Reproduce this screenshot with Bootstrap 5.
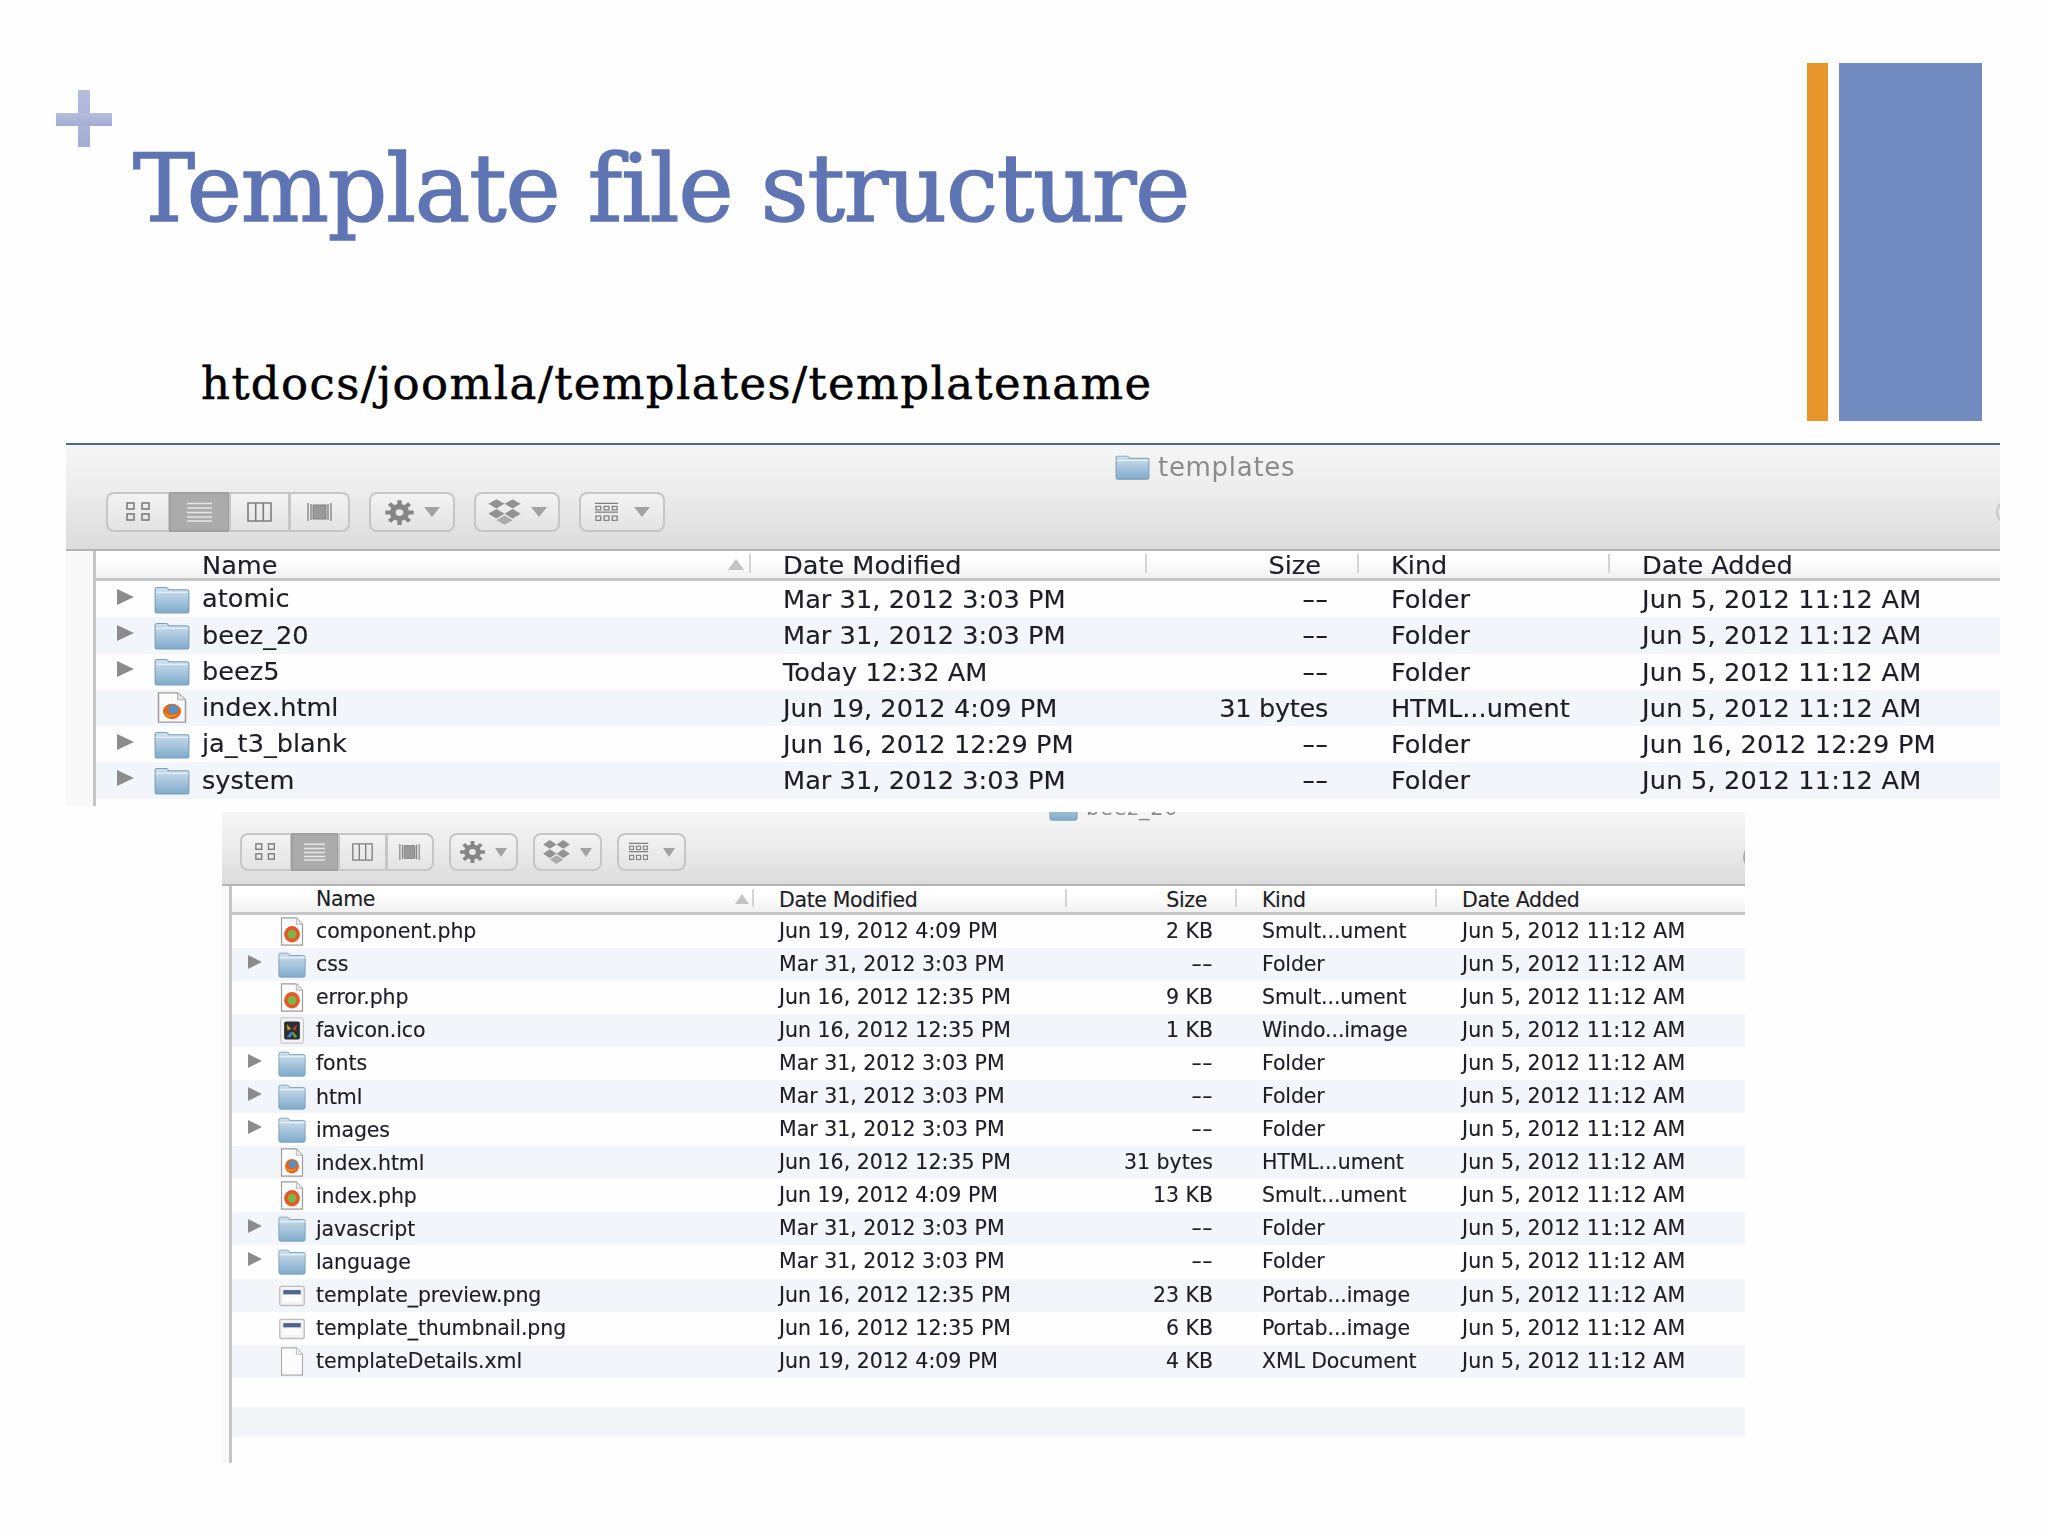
<!DOCTYPE html>
<html lang="en">
<head>
<meta charset="UTF-8">
<title>Template file structure</title>
<link href="https://cdn.jsdelivr.net/npm/bootstrap@5.3.0/dist/css/bootstrap.min.css" rel="stylesheet">
<style>
body { background: #fefefe; width: 2048px; height: 1536px; overflow: hidden; }
.slide-top { height: 443px; padding-right: 66px; }
.plus { width: 56px; height: 57px; margin: 90px 0 -4px 56px; display: block; }
.slide-title { font-family: "DejaVu Serif", serif; font-size: 93px; line-height: 1; margin: 0 0 0 133px; color: #5f75b3; font-weight: 400; letter-spacing: -1.1px; -webkit-text-stroke: 1.6px #5f75b3; white-space: nowrap; }
.slide-path { font-family: "DejaVu Serif", serif; font-size: 45px; line-height: 1; margin: 125px 0 0 201px; color: #000; letter-spacing: 1.4px; -webkit-text-stroke: .5px #000; white-space: nowrap; }
.bars { gap: 11px; }
.bar-orange { width: 21px; height: 358px; margin-top: 63px; background: #e8952b; }
.bar-blue { width: 143px; height: 358px; margin-top: 63px; background: #728bc1; }

/* finder windows */
.finder { font-family: "DejaVu Sans", sans-serif; color: #1d1d26; -webkit-text-stroke: .15px #1d1d26; filter: blur(.55px); overflow: hidden; }
.finder-lg { margin-left: 66px; width: 1934px; height: 367px; border-top: 2px solid #4a688f; --fs: 25.6px; --row: 36.25px;
  --cols: 30px 655px 396px 212px 251px 390px; --seg: 61px; --tool: 86px; }
.finder-sm { margin: 2px 0 0 222px; width: 1523px; height: 651px; --fs: 20.5px; --row: 33.05px;
  --cols: 10px 522px 313px 170px 200px 308px; --seg: 48.5px; --tool: 69.5px; }

.toolbar { background: linear-gradient(#f6f6f6, #ececec 45%, #dcdcdc); border-bottom: 2px solid #b4b4b4; position: relative; }
.finder-lg .toolbar { height: 106px; padding: 8px 0 0 40px; }
.finder-sm .toolbar { height: 74px; padding: 0 0 0 18px; }
.win-title { color: #8b8b8b; -webkit-text-stroke: 0; font-size: 26px; line-height: 28px; letter-spacing: .7px; gap: 8px; margin-left: 1009px; height: 28px; }
.finder-sm .win-title { font-size: 21px; overflow: hidden; height: 10px; line-height: 0; margin-left: 809px; align-items: flex-end; }
.finder-sm .win-title svg { margin-top: -18px; flex-shrink: 0; }
.finder-lg .win-title svg { width: 35px; height: 28px; }
.finder-sm .win-title svg { width: 29px; height: 28px; }
.win-title span { display: block; }
.finder-sm .win-title span { margin-top: -20px; line-height: 28px; }
.finder-lg .tools { margin-top: 11px; gap: 19px; }
.finder-sm .tools { margin-top: 11px; gap: 14.5px; }
.finder-lg .tools, .finder-lg .tool, .finder-lg .btn-group .btn { height: 40px; }
.finder-sm .tools, .finder-sm .tool, .finder-sm .btn-group .btn { height: 38px; }
.tool, .btn-group .btn { --bs-btn-padding-x: 0; --bs-btn-padding-y: 0; background: linear-gradient(#f3f3f3, #e3e3e3); border: 2px solid #c6c6c6; border-radius: 8px; }
.tool { width: var(--tool); gap: 9px; }
.btn-group .btn { width: var(--seg); flex: 0 0 auto; }
.btn-group .btn.first { width: calc(var(--seg) + 3px); }
.btn-group .btn.sel { background: #ababab; border-color: #a0a0a0; }
.ic-gear { width: 31px; height: 27px; }
.ic-drop { width: 35px; height: 28px; }
.ic-arr { width: 25px; height: 21px; margin-right: 6px; }
.finder-sm .ic-gear { width: 27px; height: 24px; }
.finder-sm .ic-drop { width: 29px; height: 26px; }
.finder-sm .ic-arr { width: 21px; height: 20px; margin-right: 5px; }
.caret-dn { width: 0; height: 0; border-left: 8px solid transparent; border-right: 8px solid transparent; border-top: 10px solid #a2a2a2; }
.finder-sm .caret-dn { border-left-width: 6.5px; border-right-width: 6.5px; border-top-width: 9px; }
.seg-ic { width: 25px; height: 20px; }
.finder-sm .seg-ic { width: 21px; height: 18px; }
.search-edge { position: absolute; right: -22px; bottom: 24px; width: 26px; height: 26px; border: 2px solid #c8c8c8; border-radius: 50%; }
.finder-sm .search-edge { right: -24px; bottom: 14px; border-color: #aaa; }

.listing { display: grid; grid-template-columns: var(--cols); font-size: var(--fs); }
.gutter { grid-column: 1; grid-row: 1 / 30; background: #f8f8f8; border-right: 3px solid #c4c4c4; }
.head { display: contents; }
.head > div { background: linear-gradient(#fff 30%, #f1f1f1); border-bottom: 3px solid #c6c6c6; white-space: nowrap; }
.finder-lg .head > div { height: 30px; line-height: 28px; }
.finder-sm .head > div { height: 29px; line-height: 28px; letter-spacing: -.35px; }
.head .cell { position: relative; }
.head .cell::after { content: ""; position: absolute; right: 0; top: 3px; bottom: 5px; width: 2px; background: #d4d4d4; }
.head .cell:last-child::after { display: none; }
.row-f { display: contents; }
.row-f > div { height: var(--row); line-height: var(--row); white-space: nowrap; }
.finder-lg .row-f > .c2 { letter-spacing: .05px; }
.finder-lg .row-f > .c3 { letter-spacing: -.3px; }
.finder-lg .row-f > .c4 { letter-spacing: 0; }
.finder-lg .row-f > .c5 { letter-spacing: .2px; }
.finder-sm .row-f > .c2 { letter-spacing: 0; }
.finder-sm .row-f > .c4 { letter-spacing: -.12px; }
.finder-sm .row-f > .c5 { letter-spacing: .13px; }
.finder-sm .row-f > .name { letter-spacing: -.1px; }
.row-f:nth-of-type(even) > div { background: #f2f6fa; }
.row-f > .name, .head > .name { display: flex; align-items: center; }
.row-f > .name { line-height: 1; }
.finder-lg .name { padding-left: 21px; }
.finder-sm .name { padding-left: 16px; }
.finder-lg .c2, .finder-lg .c4, .finder-lg .c5 { padding-left: 32px; }
.finder-sm .c2, .finder-sm .c4, .finder-sm .c5 { padding-left: 25px; }
.c3 { text-align: right; }
.finder-lg .c3 { padding-right: 31px; }
.finder-sm .c3 { padding-right: 24px; }
.finder-lg .head .c3 { padding-right: 38px; }
.finder-sm .head .c3 { padding-right: 30px; }
.dash { display: inline-block; transform: scaleX(1.45); transform-origin: right center; }
.tri { width: 0; height: 0; border-top: 8px solid transparent; border-bottom: 8px solid transparent; border-left: 17px solid #8c8c8c; margin-top: -5px; }
.tri-slot { flex: 0 0 17px; margin-right: 20px; display: flex; }
.ico { flex: 0 0 36px; width: 36px; height: 31px; margin-right: 12px; }
.finder-sm .tri-slot { flex-basis: 14px; margin-right: 16px; }
.finder-sm .tri { border-left-width: 14px; border-top-width: 7px; border-bottom-width: 7px; }
.finder-sm .ico { flex-basis: 28px; width: 28px; height: 29px; margin-right: 10px; }
.sortcaret { margin-left: auto; margin-right: 7px; width: 0; height: 0; border-left: 8px solid transparent; border-right: 8px solid transparent; border-bottom: 11px solid #c4c4c4; }
.finder-sm .sortcaret { margin-right: 5px; border-left-width: 7px; border-right-width: 7px; border-bottom-width: 10px; }
.head .label { flex: 0 0 auto; }
.finder-lg .head .label { margin-left: 85px; }
.finder-sm .head .label { margin-left: 68px; }
.blank-row { grid-column: 2 / 7; height: 29.5px; }
.blank-row.alt { background: #f3f5f8; }
.blank-row.end { height: 27px; }
.finder-lg .blank-row.end { height: 7px; }
</style>
</head>
<body>
<svg width="0" height="0" class="position-absolute">
  <defs>
    <linearGradient id="fg" x1="0" y1="0" x2="0" y2="1"><stop offset="0" stop-color="#d0e1ee"/><stop offset="1" stop-color="#7fabcb"/></linearGradient>
    <linearGradient id="pg" x1="0" y1="0" x2="0" y2="1"><stop offset="0" stop-color="#b5bedc"/><stop offset="1" stop-color="#a1add2"/></linearGradient>
  </defs>
  <symbol id="folder" viewBox="0 0 32 32" preserveAspectRatio="none">
    <path d="M1 5.500q0-2 2-2h8q1.500 0 2 2.500h16q2 0 2 2v20q0 2-2 2H3q-2 0-2-2z" fill="url(#fg)" stroke="#7c9fb9" stroke-width="1"/>
    <path d="M1.500 8.500h29" stroke="#eef5fa" stroke-width="1.200"/>
  </symbol>
  <symbol id="page-ff" viewBox="0 0 32 32" preserveAspectRatio="none">
    <path d="M4 1h17l7 7v23H4z" fill="#fbfbfb" stroke="#9a9a9a" stroke-width="1.300"/>
    <path d="M21 1v7h7" fill="#e6e6e6" stroke="#b4b4b4"/>
    <circle cx="16" cy="20" r="8" fill="#e0661e"/>
    <circle cx="17" cy="18" r="4.500" fill="#5b8fc4"/>
    <path d="M8 20q3 7 10 5 4-2 5-7-1 5-6 6-5 .5-9-4z" fill="#f0a22c"/>
  </symbol>
  <symbol id="page-php" viewBox="0 0 32 32" preserveAspectRatio="none">
    <path d="M4 1h17l7 7v23H4z" fill="#fbfbfb" stroke="#9a9a9a" stroke-width="1.300"/>
    <path d="M21 1v7h7" fill="#e6e6e6" stroke="#b4b4b4"/>
    <circle cx="16" cy="19" r="9" fill="#e6582a"/>
    <circle cx="16" cy="19" r="5" fill="#7db544"/>
  </symbol>
  <symbol id="page-fav" viewBox="0 0 32 32" preserveAspectRatio="none">
    <rect x="3" y="2" width="26" height="28" rx="2" fill="#f2f2f2" stroke="#bbb"/>
    <rect x="7" y="6" width="18" height="20" rx="2" fill="#2b2f33"/>
    <path d="M10 9l5 5-4 2z" fill="#d8a02c"/><path d="M22 9l-6 5 4 2z" fill="#c9382e"/>
    <path d="M10 23l5-6 2 2-3 5z" fill="#3f80c2"/><path d="M22 23l-5-6-1 2 3 5z" fill="#6ea83b"/>
  </symbol>
  <symbol id="page-png" viewBox="0 0 32 32" preserveAspectRatio="none">
    <rect x="2" y="6" width="28" height="21" rx="2" fill="#f3f3f3" stroke="#bdbdbd" stroke-width="1.500"/>
    <rect x="6" y="10" width="20" height="5" fill="#4d6690"/>
    <rect x="6" y="15" width="20" height="8" fill="#fbfbfb"/>
  </symbol>
  <symbol id="page-xml" viewBox="0 0 32 32" preserveAspectRatio="none">
    <path d="M4 1h17l7 7v23H4z" fill="#fcfcfc" stroke="#adadad" stroke-width="1.300"/>
    <path d="M21 1v7h7" fill="#ececec" stroke="#bcbcbc"/>
  </symbol>
  <symbol id="tb-grid" viewBox="0 0 25 20" preserveAspectRatio="none">
    <g fill="none" stroke="#7e7e7e" stroke-width="1.600"><rect x="1" y="1" width="7" height="6"/><rect x="16" y="1" width="7" height="6"/><rect x="1" y="12" width="7" height="6"/><rect x="16" y="12" width="7" height="6"/></g>
  </symbol>
  <symbol id="tb-list" viewBox="0 0 25 20" preserveAspectRatio="none">
    <path d="M0 1.500h25M0 6h25M0 10.500h25M0 15h25M0 19h25" stroke="#e6e6e6" stroke-width="1.700"/>
  </symbol>
  <symbol id="tb-cols" viewBox="0 0 25 20" preserveAspectRatio="none">
    <path d="M1 1h23v18H1zM8.700 1v18M16.300 1v18" fill="none" stroke="#7e7e7e" stroke-width="1.600"/>
  </symbol>
  <symbol id="tb-cover" viewBox="0 0 25 20" preserveAspectRatio="none">
    <rect x="6" y="3" width="13" height="14" fill="#9a9a9a" stroke="#7e7e7e" stroke-width="1"/>
    <path d="M1 1v18M4 2v16M21 2v16M24 1v18" stroke="#7e7e7e" stroke-width="1.300"/>
  </symbol>
  <symbol id="tb-gear" viewBox="0 0 24 24" preserveAspectRatio="none">
    <path d="M12 1v22M1 12h22M4.200 4.200l15.600 15.600M19.800 4.200L4.200 19.800" stroke="#858585" stroke-width="3.400"/>
    <circle cx="12" cy="12" r="7.500" fill="#858585"/><circle cx="12" cy="12" r="3" fill="#e8e8e8"/>
  </symbol>
  <symbol id="tb-drop" viewBox="0 0 26 24" preserveAspectRatio="none">
    <g fill="#929292"><path d="M7 1l6 4-6 4-6-4zM19 1l6 4-6 4-6-4zM7 9.500l6 4-6 4-6-4zM19 9.500l6 4-6 4-6-4z"/><path d="M13 15l6 4-6 4-6-4z" fill="#ababab"/></g>
  </symbol>
  <symbol id="tb-arr" viewBox="0 0 26 24" preserveAspectRatio="none">
    <path d="M1 1.500h24M1 11.500h24" stroke="#7e7e7e" stroke-width="1.500"/>
    <g fill="none" stroke="#7e7e7e" stroke-width="1.300"><rect x="2" y="5" width="5" height="4"/><rect x="10.500" y="5" width="5" height="4"/><rect x="19" y="5" width="5" height="4"/><rect x="2" y="16" width="5" height="5"/><rect x="10.500" y="16" width="5" height="5"/><rect x="19" y="16" width="5" height="5"/></g>
  </symbol>
</svg>

<header class="slide-top d-flex justify-content-between">
  <div>
    <svg class="plus" viewBox="0 0 56 57"><rect x="22" width="12" height="57" fill="url(#pg)"/><rect y="23" width="56" height="13" fill="url(#pg)"/></svg>
    <h1 class="slide-title">Template file structure</h1>
    <p class="slide-path">htdocs/joomla/templates/templatename</p>
  </div>
  <div class="bars d-flex">
    <div class="bar-orange"></div>
    <div class="bar-blue"></div>
  </div>
</header>

<section class="finder finder-lg">
  <div class="toolbar">
    <div class="win-title d-flex align-items-center"><svg><use href="#folder"/></svg><span>templates</span></div>
    <div class="tools d-flex">
      <div class="btn-group">
        <button class="btn first d-flex align-items-center justify-content-center"><svg class="seg-ic"><use href="#tb-grid"/></svg></button>
        <button class="btn sel d-flex align-items-center justify-content-center"><svg class="seg-ic"><use href="#tb-list"/></svg></button>
        <button class="btn d-flex align-items-center justify-content-center"><svg class="seg-ic"><use href="#tb-cols"/></svg></button>
        <button class="btn d-flex align-items-center justify-content-center"><svg class="seg-ic"><use href="#tb-cover"/></svg></button>
      </div>
      <button class="btn tool d-flex align-items-center justify-content-center"><svg class="ic-gear"><use href="#tb-gear"/></svg><span class="caret-dn"></span></button>
      <button class="btn tool d-flex align-items-center justify-content-center"><svg class="ic-drop"><use href="#tb-drop"/></svg><span class="caret-dn"></span></button>
      <button class="btn tool d-flex align-items-center justify-content-center"><svg class="ic-arr"><use href="#tb-arr"/></svg><span class="caret-dn"></span></button>
    </div>
    <div class="search-edge"></div>
  </div>
  <div class="listing">
    <div class="gutter"></div>
    <div class="head">
      <div class="cell name"><span class="label">Name</span><span class="sortcaret"></span></div>
      <div class="cell c2">Date Modified</div><div class="cell c3">Size</div><div class="cell c4">Kind</div><div class="cell c5">Date Added</div>
    </div>
    <div class="row-f"><div class="name"><span class="tri-slot"><i class="tri"></i></span><svg class="ico"><use href="#folder"/></svg>atomic</div><div class="c2">Mar 31, 2012 3:03 PM</div><div class="c3"><span class="dash">--</span></div><div class="c4">Folder</div><div class="c5">Jun 5, 2012 11:12 AM</div></div>
    <div class="row-f"><div class="name"><span class="tri-slot"><i class="tri"></i></span><svg class="ico"><use href="#folder"/></svg>beez_20</div><div class="c2">Mar 31, 2012 3:03 PM</div><div class="c3"><span class="dash">--</span></div><div class="c4">Folder</div><div class="c5">Jun 5, 2012 11:12 AM</div></div>
    <div class="row-f"><div class="name"><span class="tri-slot"><i class="tri"></i></span><svg class="ico"><use href="#folder"/></svg>beez5</div><div class="c2">Today 12:32 AM</div><div class="c3"><span class="dash">--</span></div><div class="c4">Folder</div><div class="c5">Jun 5, 2012 11:12 AM</div></div>
    <div class="row-f"><div class="name"><span class="tri-slot"></span><svg class="ico"><use href="#page-ff"/></svg>index.html</div><div class="c2">Jun 19, 2012 4:09 PM</div><div class="c3">31 bytes</div><div class="c4">HTML...ument</div><div class="c5">Jun 5, 2012 11:12 AM</div></div>
    <div class="row-f"><div class="name"><span class="tri-slot"><i class="tri"></i></span><svg class="ico"><use href="#folder"/></svg>ja_t3_blank</div><div class="c2">Jun 16, 2012 12:29 PM</div><div class="c3"><span class="dash">--</span></div><div class="c4">Folder</div><div class="c5">Jun 16, 2012 12:29 PM</div></div>
    <div class="row-f"><div class="name"><span class="tri-slot"><i class="tri"></i></span><svg class="ico"><use href="#folder"/></svg>system</div><div class="c2">Mar 31, 2012 3:03 PM</div><div class="c3"><span class="dash">--</span></div><div class="c4">Folder</div><div class="c5">Jun 5, 2012 11:12 AM</div></div>
    <div class="blank-row end"></div>
  </div>
</section>

<section class="finder finder-sm">
  <div class="toolbar">
    <div class="win-title d-flex"><svg><use href="#folder"/></svg><span>beez_20</span></div>
    <div class="tools d-flex">
      <div class="btn-group">
        <button class="btn first d-flex align-items-center justify-content-center"><svg class="seg-ic"><use href="#tb-grid"/></svg></button>
        <button class="btn sel d-flex align-items-center justify-content-center"><svg class="seg-ic"><use href="#tb-list"/></svg></button>
        <button class="btn d-flex align-items-center justify-content-center"><svg class="seg-ic"><use href="#tb-cols"/></svg></button>
        <button class="btn d-flex align-items-center justify-content-center"><svg class="seg-ic"><use href="#tb-cover"/></svg></button>
      </div>
      <button class="btn tool d-flex align-items-center justify-content-center"><svg class="ic-gear"><use href="#tb-gear"/></svg><span class="caret-dn"></span></button>
      <button class="btn tool d-flex align-items-center justify-content-center"><svg class="ic-drop"><use href="#tb-drop"/></svg><span class="caret-dn"></span></button>
      <button class="btn tool d-flex align-items-center justify-content-center"><svg class="ic-arr"><use href="#tb-arr"/></svg><span class="caret-dn"></span></button>
    </div>
    <div class="search-edge"></div>
  </div>
  <div class="listing">
    <div class="gutter"></div>
    <div class="head">
      <div class="cell name"><span class="label">Name</span><span class="sortcaret"></span></div>
      <div class="cell c2">Date Modified</div><div class="cell c3">Size</div><div class="cell c4">Kind</div><div class="cell c5">Date Added</div>
    </div>
    <div class="row-f"><div class="name"><span class="tri-slot"></span><svg class="ico"><use href="#page-php"/></svg>component.php</div><div class="c2">Jun 19, 2012 4:09 PM</div><div class="c3">2 KB</div><div class="c4">Smult...ument</div><div class="c5">Jun 5, 2012 11:12 AM</div></div>
    <div class="row-f"><div class="name"><span class="tri-slot"><i class="tri"></i></span><svg class="ico"><use href="#folder"/></svg>css</div><div class="c2">Mar 31, 2012 3:03 PM</div><div class="c3"><span class="dash">--</span></div><div class="c4">Folder</div><div class="c5">Jun 5, 2012 11:12 AM</div></div>
    <div class="row-f"><div class="name"><span class="tri-slot"></span><svg class="ico"><use href="#page-php"/></svg>error.php</div><div class="c2">Jun 16, 2012 12:35 PM</div><div class="c3">9 KB</div><div class="c4">Smult...ument</div><div class="c5">Jun 5, 2012 11:12 AM</div></div>
    <div class="row-f"><div class="name"><span class="tri-slot"></span><svg class="ico"><use href="#page-fav"/></svg>favicon.ico</div><div class="c2">Jun 16, 2012 12:35 PM</div><div class="c3">1 KB</div><div class="c4">Windo...image</div><div class="c5">Jun 5, 2012 11:12 AM</div></div>
    <div class="row-f"><div class="name"><span class="tri-slot"><i class="tri"></i></span><svg class="ico"><use href="#folder"/></svg>fonts</div><div class="c2">Mar 31, 2012 3:03 PM</div><div class="c3"><span class="dash">--</span></div><div class="c4">Folder</div><div class="c5">Jun 5, 2012 11:12 AM</div></div>
    <div class="row-f"><div class="name"><span class="tri-slot"><i class="tri"></i></span><svg class="ico"><use href="#folder"/></svg>html</div><div class="c2">Mar 31, 2012 3:03 PM</div><div class="c3"><span class="dash">--</span></div><div class="c4">Folder</div><div class="c5">Jun 5, 2012 11:12 AM</div></div>
    <div class="row-f"><div class="name"><span class="tri-slot"><i class="tri"></i></span><svg class="ico"><use href="#folder"/></svg>images</div><div class="c2">Mar 31, 2012 3:03 PM</div><div class="c3"><span class="dash">--</span></div><div class="c4">Folder</div><div class="c5">Jun 5, 2012 11:12 AM</div></div>
    <div class="row-f"><div class="name"><span class="tri-slot"></span><svg class="ico"><use href="#page-ff"/></svg>index.html</div><div class="c2">Jun 16, 2012 12:35 PM</div><div class="c3">31 bytes</div><div class="c4">HTML...ument</div><div class="c5">Jun 5, 2012 11:12 AM</div></div>
    <div class="row-f"><div class="name"><span class="tri-slot"></span><svg class="ico"><use href="#page-php"/></svg>index.php</div><div class="c2">Jun 19, 2012 4:09 PM</div><div class="c3">13 KB</div><div class="c4">Smult...ument</div><div class="c5">Jun 5, 2012 11:12 AM</div></div>
    <div class="row-f"><div class="name"><span class="tri-slot"><i class="tri"></i></span><svg class="ico"><use href="#folder"/></svg>javascript</div><div class="c2">Mar 31, 2012 3:03 PM</div><div class="c3"><span class="dash">--</span></div><div class="c4">Folder</div><div class="c5">Jun 5, 2012 11:12 AM</div></div>
    <div class="row-f"><div class="name"><span class="tri-slot"><i class="tri"></i></span><svg class="ico"><use href="#folder"/></svg>language</div><div class="c2">Mar 31, 2012 3:03 PM</div><div class="c3"><span class="dash">--</span></div><div class="c4">Folder</div><div class="c5">Jun 5, 2012 11:12 AM</div></div>
    <div class="row-f"><div class="name"><span class="tri-slot"></span><svg class="ico"><use href="#page-png"/></svg>template_preview.png</div><div class="c2">Jun 16, 2012 12:35 PM</div><div class="c3">23 KB</div><div class="c4">Portab...image</div><div class="c5">Jun 5, 2012 11:12 AM</div></div>
    <div class="row-f"><div class="name"><span class="tri-slot"></span><svg class="ico"><use href="#page-png"/></svg>template_thumbnail.png</div><div class="c2">Jun 16, 2012 12:35 PM</div><div class="c3">6 KB</div><div class="c4">Portab...image</div><div class="c5">Jun 5, 2012 11:12 AM</div></div>
    <div class="row-f"><div class="name"><span class="tri-slot"></span><svg class="ico"><use href="#page-xml"/></svg>templateDetails.xml</div><div class="c2">Jun 19, 2012 4:09 PM</div><div class="c3">4 KB</div><div class="c4">XML Document</div><div class="c5">Jun 5, 2012 11:12 AM</div></div>
    <div class="blank-row"></div>
    <div class="blank-row alt"></div>
    <div class="blank-row end"></div>
  </div>
</section>
</body>
</html>
